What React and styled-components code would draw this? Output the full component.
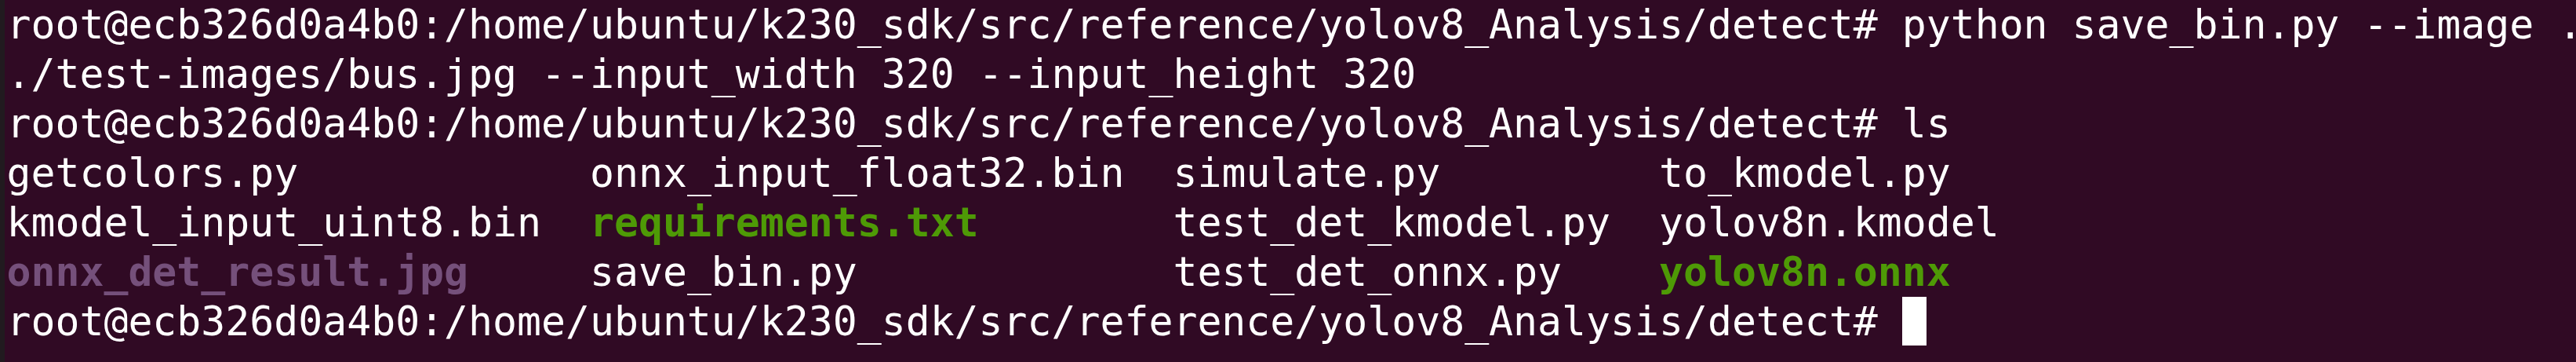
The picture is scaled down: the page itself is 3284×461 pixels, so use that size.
import React from "react";
import styled, { createGlobalStyle } from "styled-components";

const GlobalStyle = createGlobalStyle`
  html, body {
    margin: 0;
    padding: 0;
    background: #300a24;
    overflow: hidden;
  }
`;

const Window = styled.div`
  display: flex;
  width: 3284px;
  height: 461px;
  background-color: #300a24;
  overflow: hidden;
`;

const Edge = styled.div`
  flex: 0 0 6px;
  background-color: #211a1f;
`;

const Screen = styled.div`
  flex: 1;
  padding: 0 0 0 2.5px;
  font-family: "DejaVu Sans Mono", "Liberation Mono", monospace;
  font-size: 51.46px;
  line-height: 63px;
  color: #ffffff;
  white-space: pre;
  overflow: hidden;
`;

const Line = styled.div`
  height: 63px;
`;

const Entry = styled.span`
  ${({ tone }) => tone === "exec" && `color: #4e9a06; font-weight: bold;`}
  ${({ tone }) => tone === "image" && `color: #75507b; font-weight: bold;`}
`;

const Cursor = styled.span`
  display: inline-block;
  width: 31px;
  height: 62px;
  vertical-align: top;
  background-color: #ffffff;
`;

const prompt = "root@ecb326d0a4b0:/home/ubuntu/k230_sdk/src/reference/yolov8_Analysis/detect# ";

// ls output, padded to the terminal's column widths (24, 24, 20)
const listing = [
  [["getcolors.py"], ["onnx_input_float32.bin"], ["simulate.py"], ["to_kmodel.py"]],
  [["kmodel_input_uint8.bin"], ["requirements.txt", "exec"], ["test_det_kmodel.py"], ["yolov8n.kmodel"]],
  [["onnx_det_result.jpg", "image"], ["save_bin.py"], ["test_det_onnx.py"], ["yolov8n.onnx", "exec"]],
];
const widths = [24, 24, 20, 0];

function App() {
  return (
    <Window>
      <GlobalStyle />
      <Edge />
      <Screen>
        <Line>{prompt + "python save_bin.py --image ."}</Line>
        <Line>./test-images/bus.jpg --input_width 320 --input_height 320</Line>
        <Line>{prompt + "ls"}</Line>
        {listing.map((row, i) => (
          <Line key={i}>
            {row.map(([name, tone], j) => (
              <React.Fragment key={name}>
                <Entry tone={tone}>{name}</Entry>
                {" ".repeat(Math.max(0, widths[j] - name.length))}
              </React.Fragment>
            ))}
          </Line>
        ))}
        <Line>
          {prompt}
          <Cursor />
        </Line>
      </Screen>
    </Window>
  );
}

export default App;
